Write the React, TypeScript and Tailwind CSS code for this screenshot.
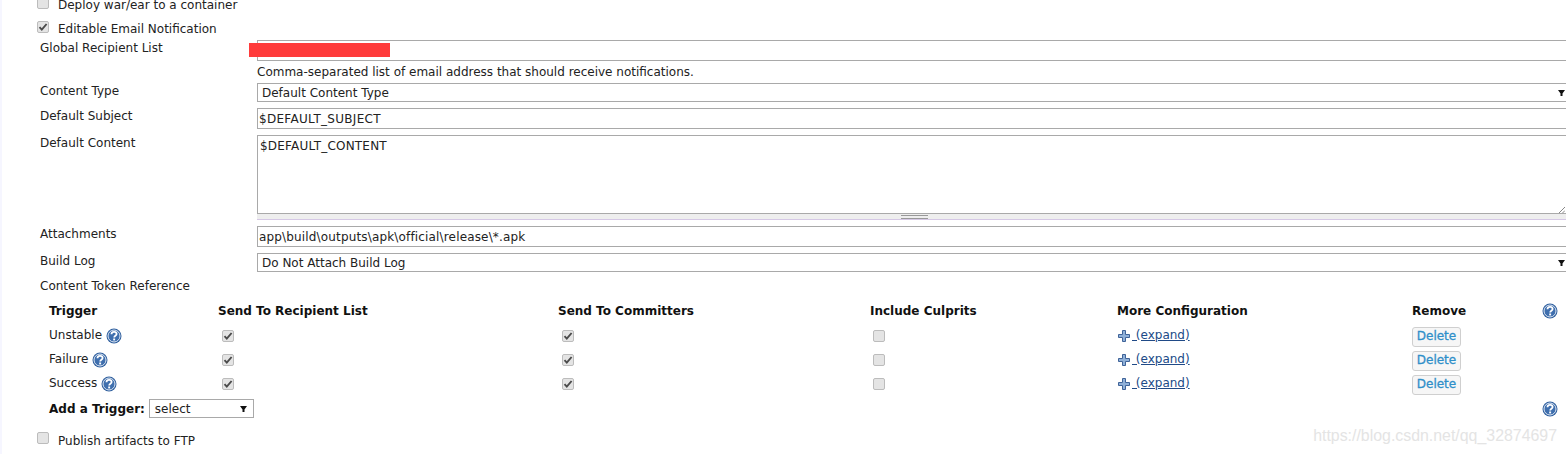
import React from 'react';

const HelpIcon = () => (
  <svg width="16" height="16" viewBox="0 0 16 16" className="shrink-0">
    <circle cx="8" cy="8" r="7.5" fill="#2f5f9e" />
    <circle cx="8" cy="8" r="6" fill="#3f6fae" stroke="#dfe8f4" strokeWidth="1" />
    <path
      d="M5.500 6.200c0-1.500 1.100-2.300 2.600-2.300s2.500.9 2.500 2.100c0 1.800-2.400 1.800-2.400 3.500"
      fill="none"
      stroke="#fff"
      strokeWidth="1.800"
    />
    <rect x="7.200" y="10.500" width="1.900" height="1.900" fill="#fff" />
  </svg>
);

const PlusIcon = () => (
  <svg width="12" height="12" viewBox="0 0 12 12" className="shrink-0">
    <path d="M4.500.5h3v4h4v3h-4v4h-3v-4h-4v-3h4z" fill="#8fb0d8" stroke="#3f6398" strokeWidth="1" />
  </svg>
);

const Checkbox = ({ checked = false }: { checked?: boolean }) => (
  <span className="flex h-[12px] w-[12px] shrink-0 items-center justify-center rounded-[2px] border border-[#bcbcbc] bg-[#e4e4e4]">
    {checked && (
      <svg width="10" height="10" viewBox="0 0 10 10">
        <path d="M1.500 5.200l2.300 2.400L8.600 2" fill="none" stroke="#4a4a4a" strokeWidth="1.9" />
      </svg>
    )}
  </span>
);

const Arrow = () => (
  <svg width="7" height="6" viewBox="0 0 7 6" className="shrink-0">
    <path d="M0 0h7L4.500 3.500V6h-2V3.500z" fill="#111" />
  </svg>
);

const Field = ({
  label,
  height,
  children,
}: {
  label: string;
  height: string;
  children?: React.ReactNode;
}) => (
  <div className={`flex ${height}`}>
    <div className="w-[217px] shrink-0 pt-[1px] leading-[15px]">{label}</div>
    <div className="min-w-0 flex-1">{children}</div>
  </div>
);

const TextBox = ({ value, className = '' }: { value?: string; className?: string }) => (
  <div className={`h-[21px] border border-r-0 border-[#a9a9a9] pl-[1px] leading-[20px] ${className}`}>
    {value}
  </div>
);

const SelectBox = ({ value }: { value: string }) => (
  <div className="flex h-[19px] items-center justify-between border border-r-0 border-[#a9a9a9] pl-[4px] pr-[1px]">
    <span>{value}</span>
    <Arrow />
  </div>
);

const Cell = ({ checked, className = 'pl-[4px]' }: { checked: boolean; className?: string }) => (
  <div className={`pt-[6px] ${className}`}>
    <Checkbox checked={checked} />
  </div>
);

const gridClass = 'grid grid-cols-[169px_340px_312px_247px_295px_130px_1fr]';

const triggers = ['Unstable', 'Failure', 'Success'];

export default function App() {
  return (
    <div
      className="relative h-[454px] w-[1566px] overflow-hidden border-l-2 border-[#f6f6ff] bg-white text-[12px] text-[#222]"
      style={{ fontFamily: '"DejaVu Sans", Verdana, sans-serif' }}
    >
      <div className="pl-[35px]">
        <div className="flex h-[15px] items-start gap-[9px]">
          <span className="-mt-[3px]">
            <Checkbox />
          </span>
          <span className="leading-[10px]">Deploy war/ear to a container</span>
        </div>
        <div className="mt-[6px] flex h-[16px] items-start gap-[9px]">
          <Checkbox checked />
          <span className="pt-[1px] leading-[15px]">Editable Email Notification</span>
        </div>
      </div>

      <div className="mt-[3px] pl-[38px]">
        <Field label="Global Recipient List" height="h-[43px]">
          <TextBox />
          <div className="pt-[4px] leading-[15px]">
            Comma-separated list of email address that should receive notifications.
          </div>
        </Field>
        <Field label="Content Type" height="h-[25px]">
          <SelectBox value="Default Content Type" />
        </Field>
        <Field label="Default Subject" height="h-[27px]">
          <TextBox value="$DEFAULT_SUBJECT" className="tracking-[0.3px]" />
        </Field>
        <Field label="Default Content" height="h-[91px]">
          <div className="relative h-[78px] border-t border-l border-[#a9a9a9] pl-[2px] pt-[3px] leading-[15px] tracking-[0.2px]">
            $DEFAULT_CONTENT
            <svg width="7" height="7" viewBox="0 0 7 7" className="absolute bottom-0 right-[1px]">
              <path d="M1 7l6-6M4.500 7L7 4.500" stroke="#888" strokeWidth="1" />
            </svg>
          </div>
          <div className="flex h-[7px] items-center justify-center border-y border-t-[#a9a9a9] border-b-[#d5c8e5] bg-[#eeeeee]">
            <div className="ml-[6px] h-[4px] w-[27px] border-y border-[#999]" />
          </div>
        </Field>
        <Field label="Attachments" height="h-[27px]">
          <TextBox value="app\build\outputs\apk\official\release\*.apk" className="tracking-[0.16px]" />
        </Field>
        <Field label="Build Log" height="h-[25px]">
          <SelectBox value="Do Not Attach Build Log" />
        </Field>
        <Field label="Content Token Reference" height="h-[25px]" />

        <div className="pl-[9px]">
          <div className={`${gridClass} h-[21px] font-bold leading-[15px] text-[#111]`}>
            <div className="pt-[1px]">Trigger</div>
            <div className="pt-[1px]">Send To Recipient List</div>
            <div className="pt-[1px]">Send To Committers</div>
            <div className="pt-[1px]">Include Culprits</div>
            <div className="pt-[1px]">More Configuration</div>
            <div className="pt-[1px]">Remove</div>
            <HelpIcon />
          </div>

          {triggers.map((name) => (
            <div key={name} className={`${gridClass} h-[24px]`}>
              <div className="flex items-start gap-[4px] pt-[4px]">
                <span className="leading-[15px]">{name}</span>
                <HelpIcon />
              </div>
              <Cell checked />
              <Cell checked />
              <Cell checked={false} className="pl-[3px]" />
              <div className="flex items-start pl-[1px] pt-[6px]">
                <PlusIcon />
                <a className="-mt-[2px] ml-[2px] whitespace-pre leading-[15px] text-[#204a87] underline">
                  {' (expand)'}
                </a>
              </div>
              <div className="pt-[3px]">
                <button className="h-[20px] w-[49px] rounded-[3px] border border-[#cfcfcf] bg-[#f6f6f6] pb-[1px] text-[12px] leading-[15px] text-[#2f8fc9] [-webkit-text-stroke:0.3px_#2f8fc9]">
                  Delete
                </button>
              </div>
            </div>
          ))}

          <div className="mt-[3px] flex h-[19px] items-center justify-between">
            <div className="flex items-center gap-[4px]">
              <span className="font-bold text-[#111]">Add a Trigger:</span>
              <div className="flex h-[19px] w-[105px] items-center justify-between border border-[#a9a9a9] pl-[5px] pr-[6px]">
                <span>select</span>
                <Arrow />
              </div>
            </div>
            <div className="mr-[8px]">
              <HelpIcon />
            </div>
          </div>
        </div>
      </div>

      <div className="mt-[14px] flex items-start gap-[9px] pl-[35px]">
        <Checkbox />
        <span className="pt-[2px] leading-[15px]">Publish artifacts to FTP</span>
      </div>

      {/* redaction bar and blog watermark sit over the page */}
      <div className="absolute left-[247px] top-[43px] h-[14px] w-[141px] bg-[#ff3b3b]" />
      <div
        className="absolute right-[9px] top-[427px] text-[15.9px] leading-[18px] text-[#e4e4e4]"
        style={{ fontFamily: '"Liberation Sans", Arial, sans-serif' }}
      >
        https://blog.csdn.net/qq_32874697
      </div>
    </div>
  );
}
